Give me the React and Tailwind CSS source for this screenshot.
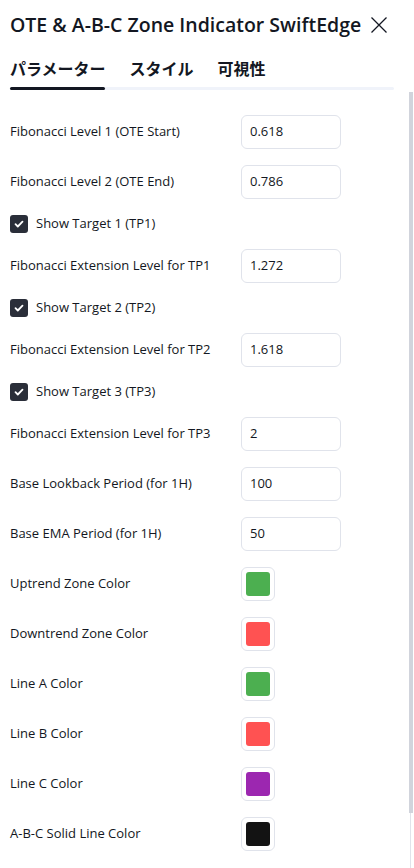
import React from 'react';

const font = { fontFamily: '"Open Sans", "Noto Sans CJK JP", sans-serif' };

const rows = [
  { type: 'input', label: 'Fibonacci Level 1 (OTE Start)', value: '0.618' },
  { type: 'input', label: 'Fibonacci Level 2 (OTE End)', value: '0.786' },
  { type: 'check', label: 'Show Target 1 (TP1)' },
  { type: 'input', label: 'Fibonacci Extension Level for TP1', value: '1.272' },
  { type: 'check', label: 'Show Target 2 (TP2)' },
  { type: 'input', label: 'Fibonacci Extension Level for TP2', value: '1.618' },
  { type: 'check', label: 'Show Target 3 (TP3)' },
  { type: 'input', label: 'Fibonacci Extension Level for TP3', value: '2' },
  { type: 'input', label: 'Base Lookback Period (for 1H)', value: '100' },
  { type: 'input', label: 'Base EMA Period (for 1H)', value: '50' },
  { type: 'color', label: 'Uptrend Zone Color', color: 'bg-[#4caf50]' },
  { type: 'color', label: 'Downtrend Zone Color', color: 'bg-[#ff5252]' },
  { type: 'color', label: 'Line A Color', color: 'bg-[#4caf50]' },
  { type: 'color', label: 'Line B Color', color: 'bg-[#ff5252]' },
  { type: 'color', label: 'Line C Color', color: 'bg-[#9c27b0]' },
  { type: 'color', label: 'A-B-C Solid Line Color', color: 'bg-[#131313]' },
];

function Row({ row }) {
  if (row.type === 'check') {
    return (
      <div className="flex items-center h-[18px] gap-2">
        <div className="w-[18px] h-[18px] rounded-[3px] bg-[#2a2e39] flex items-center justify-center">
          <svg width="12" height="12" viewBox="0 0 12 12" fill="none">
            <path d="M2.5 6.2l2.3 2.3 4.7-4.8" stroke="white" strokeWidth="1.8" strokeLinecap="round" strokeLinejoin="round" />
          </svg>
        </div>
        <span className="text-[13px] text-[#131722]">{row.label}</span>
      </div>
    );
  }
  return (
    <div className="flex items-center h-[34px]">
      <span className="w-[231px] text-[13px] text-[#131722]">{row.label}</span>
      {row.type === 'input' ? (
        <div className="w-[100px] h-[34px] border border-[#e0e3eb] rounded-md px-2 flex items-center text-[13px] text-[#131722]">
          {row.value}
        </div>
      ) : (
        <div className="w-[34px] h-[34px] border border-[#e0e3eb] rounded-md flex items-center justify-center">
          <div className={`w-6 h-6 rounded-[3px] ${row.color}`} />
        </div>
      )}
    </div>
  );
}

export default function App() {
  return (
    <div className="relative w-[414px] h-[868px] overflow-hidden bg-white" style={font}>
      <div className="flex items-center justify-between h-[50px] pl-[10px] pr-[26px]">
        <h1 className="text-[19.5px] font-semibold text-[#131722] whitespace-nowrap">OTE &amp; A-B-C Zone Indicator SwiftEdge</h1>
        <svg width="18" height="18" viewBox="0 0 18 18" fill="none">
          <path d="M1.5 1.5l15 15M16.5 1.5l-15 15" stroke="#131722" strokeWidth="1.3" />
        </svg>
      </div>
      <div className="mx-[10px] w-[384px]">
        <div className="flex gap-6 h-[37px] items-end pb-[6px] whitespace-nowrap">
          <span className="text-[16px] font-bold text-[#131722]">パラメーター</span>
          <span className="text-[16px] font-bold text-[#131722]">スタイル</span>
          <span className="text-[16px] font-bold text-[#131722]">可視性</span>
        </div>
        <div className="h-[3px] bg-[#f0f3fa] rounded-full">
          <div className="h-[3px] w-[95px] bg-[#131722] rounded-full" />
        </div>
      </div>
      <div className="flex flex-col gap-4 px-[10px] pt-[25px]">
        {rows.map((row, i) => (
          <Row key={i} row={row} />
        ))}
      </div>
      <div className="absolute right-[1px] top-[92px] w-[4px] h-[721px] bg-[#d1d4dc]" />
      <div className="absolute right-[3px] top-[813px] w-px h-[55px] bg-[#e0e3eb]" />
    </div>
  );
}
